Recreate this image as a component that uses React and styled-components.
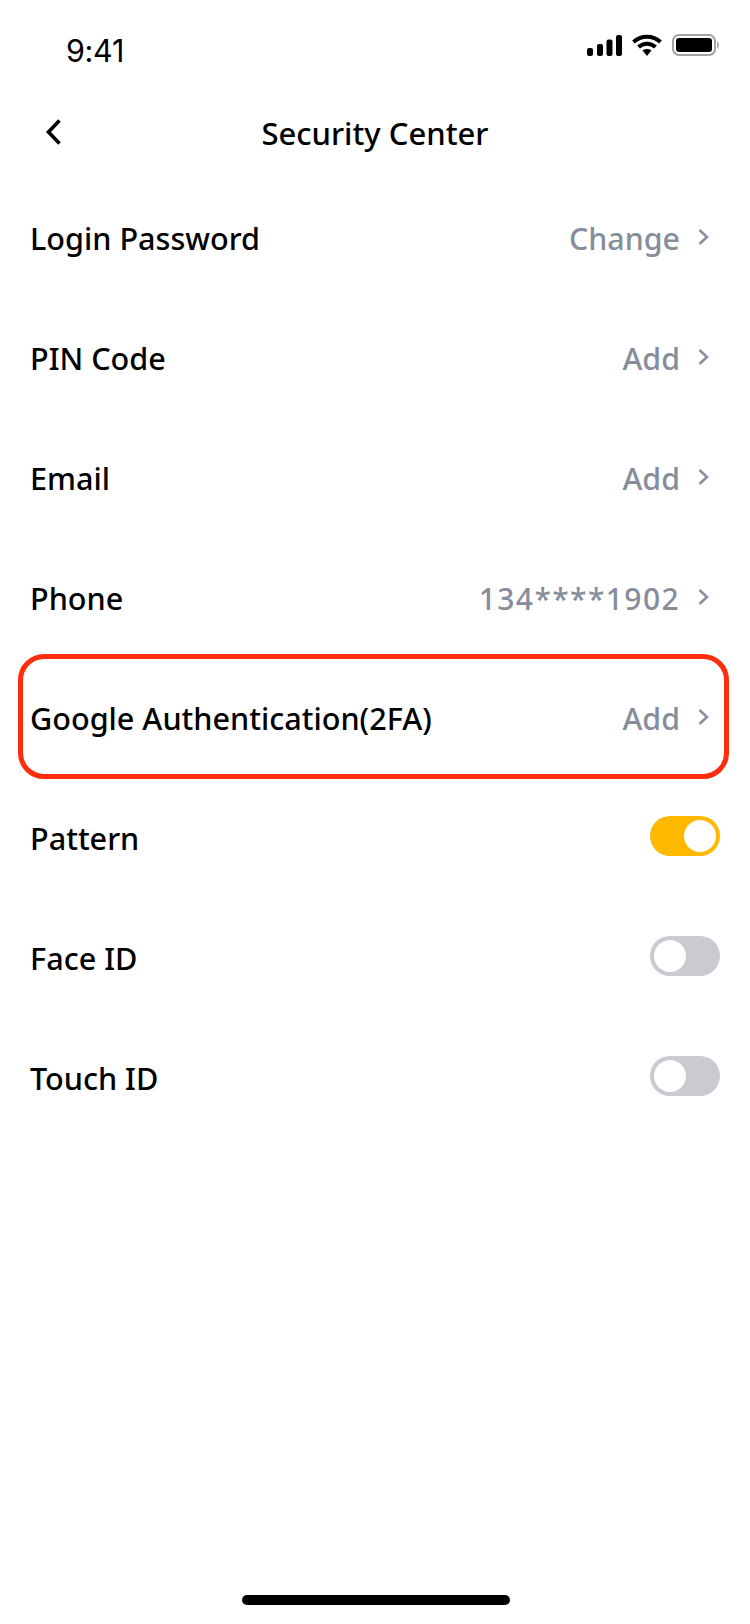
import React from 'react'
import styled, { createGlobalStyle } from 'styled-components'

const GlobalStyle = createGlobalStyle`
  html, body {
    margin: 0;
    padding: 0;
    background: #fff;
  }
`

const Screen = styled.div`
  width: 750px;
  height: 1624px;
  background: #fff;
  display: flex;
  flex-direction: column;
  font-family: "Noto Sans", "Liberation Sans", sans-serif;
  color: #000;
  overflow: hidden;
`

const StatusBar = styled.div`
  height: 88px;
  padding: 0 31px 0 66px;
  display: flex;
  align-items: center;
  justify-content: space-between;
`

const Time = styled.span`
  font-size: 30.5px;
  font-family: "Inter", sans-serif;
  font-weight: 400;
  letter-spacing: -0.3px;
  margin-top: 12px;
`

const StatusIcons = styled.div`
  display: flex;
  align-items: center;
  gap: 10px;
  margin-top: 2px;
`

const NavBar = styled.div`
  height: 91px;
  padding: 0 31px;
  display: grid;
  grid-template-columns: 60px 1fr 60px;
  align-items: center;
`

const BackButton = styled.button`
  border: none;
  background: none;
  padding: 0 0 0 12px;
  margin-top: -3px;
  display: flex;
  cursor: pointer;
`

const Title = styled.h1`
  margin: 0 0 2px;
  font-size: 31px;
  font-weight: 500;
  text-align: center;
`

const List = styled.div`
  display: flex;
  flex-direction: column;
`

const Row = styled.div`
  position: relative;
  height: 120px;
  padding: 0 30px;
  display: flex;
  align-items: center;
  justify-content: space-between;
  ${(p) => p.$highlight && `
    &::after {
      content: '';
      position: absolute;
      left: 18px;
      right: 21px;
      top: -5px;
      bottom: 0;
      border: 5px solid #ff2d0d;
      border-radius: 26px;
      pointer-events: none;
    }
  `}
`

const Label = styled.span`
  font-size: 30.6px;
  font-weight: 500;
  padding-bottom: 2px;
`

const Action = styled.div`
  display: flex;
  align-items: center;
  gap: 17px;
  margin-right: 9px;
`

const Value = styled.span`
  font-size: ${(p) => (p.$digits ? '30px' : '30.4px')};
  font-weight: 500;
  color: #868d9b;
  padding-bottom: 2px;
  letter-spacing: ${(p) => (p.$digits ? '1.4px' : '0')};
`

const Toggle = styled.div`
  width: 70px;
  height: 40px;
  border-radius: 20px;
  background: ${(p) => (p.$on ? '#ffb900' : '#c9cbd0')};
  position: relative;
  margin-top: -6px;

  &::after {
    content: '';
    position: absolute;
    top: 4px;
    left: ${(p) => (p.$on ? '34px' : '4px')};
    width: 32px;
    height: 32px;
    border-radius: 50%;
    background: #fff;
  }
`

const HomeIndicator = styled.div`
  width: 268px;
  height: 10px;
  border-radius: 5px;
  background: #000;
  margin: auto 0 19px 242px;
`

const ChevronSvg = styled.svg`
  margin-top: -4px;
`

const SignalIcon = () => (
  <svg width="35" height="21" viewBox="0 0 35 21">
    <rect x="0" y="13" width="6" height="8" rx="2" />
    <rect x="10" y="9" width="6" height="12" rx="2" />
    <rect x="19.5" y="4.5" width="6" height="16.5" rx="2" />
    <rect x="29" y="0" width="6" height="21" rx="2" />
  </svg>
)

const WifiIcon = () => (
  <svg width="30" height="22" viewBox="0 0 30 22" fill="none" stroke="#000" strokeWidth="4">
    <path d="M1.5 8C9 1 21 1 28.5 8" />
    <path d="M6.5 13C11.5 8.5 18.5 8.5 23.5 13" />
    <path d="M10.5 16.5 L15 22 L19.5 16.5 C17 14.5 13 14.5 10.5 16.5Z" fill="#000" stroke="none" />
  </svg>
)

const BatteryIcon = () => (
  <svg width="47" height="22" viewBox="0 0 47 22">
    <rect x="1" y="1" width="42" height="20" rx="6" fill="none" stroke="#a3a3a3" strokeWidth="2" />
    <rect x="4" y="4" width="36" height="14" rx="3" fill="#000" />
    <path d="M45 7.5C46 8 47 9.5 47 11s-1 3-2 3.5z" fill="#a3a3a3" />
  </svg>
)

const BackIcon = () => (
  <svg width="20" height="34" viewBox="0 0 20 34" fill="none" stroke="#000" strokeWidth="3.6">
    <path d="M16.5 5.5 L5.5 17 L16.5 28.5" />
  </svg>
)

const ChevronIcon = () => (
  <ChevronSvg width="14" height="20" viewBox="0 0 14 20" fill="none" stroke="#868d9b" strokeWidth="2.4">
    <path d="M2.5 3 L10 10 L2.5 17" />
  </ChevronSvg>
)

const linkRows = [
  { label: 'Login Password', value: 'Change' },
  { label: 'PIN Code', value: 'Add' },
  { label: 'Email', value: 'Add' },
  { label: 'Phone', value: '134****1902', digits: true },
  { label: 'Google Authentication(2FA)', value: 'Add', highlight: true },
]

const toggleRows = [
  { label: 'Pattern', on: true },
  { label: 'Face ID', on: false },
  { label: 'Touch ID', on: false },
]

const App = () => {
  return (
    <Screen>
      <GlobalStyle />
      <StatusBar>
        <Time>9:41</Time>
        <StatusIcons>
          <SignalIcon />
          <WifiIcon />
          <BatteryIcon />
        </StatusIcons>
      </StatusBar>
      <NavBar>
        <BackButton><BackIcon /></BackButton>
        <Title>Security Center</Title>
      </NavBar>
      <List>
        {linkRows.map((row) => (
          <Row key={row.label} $highlight={row.highlight}>
            <Label>{row.label}</Label>
            <Action>
              <Value $digits={row.digits}>{row.value}</Value>
              <ChevronIcon />
            </Action>
          </Row>
        ))}
        {toggleRows.map((row) => (
          <Row key={row.label}>
            <Label>{row.label}</Label>
            <Toggle $on={row.on} />
          </Row>
        ))}
      </List>
      <HomeIndicator />
    </Screen>
  )
}

export default App
